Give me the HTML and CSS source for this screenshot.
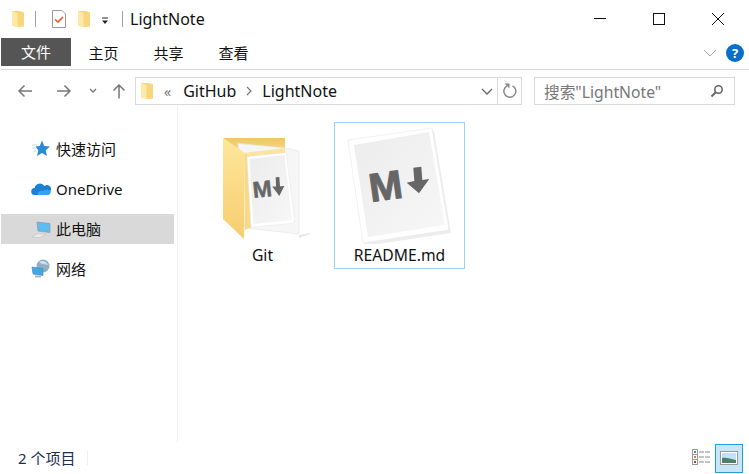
FILE: index.html
```html
<!DOCTYPE html>
<html lang="zh-CN">
<head>
  <meta charset="UTF-8" />
  <title>LightNote</title>
  <link rel="stylesheet" href="styles.css">
</head>
<body>
  <header class="titlebar">
    <svg class="qa-folder" width="14" height="18" viewBox="0 0 14 18"><path d="M1 1h8l4 1.500v14l-5 .5-7-1.500z" fill="#f8d67e"/><path d="M1 1l5.500 2.500v14L1 15.500z" fill="#fdeaa8"/></svg>
    <span class="qa-sep"></span>
    <svg class="qa-check" width="16" height="20" viewBox="0 0 16 20"><path d="M1.500 1.500h9.500l3.500 3.500v13.500h-13z" fill="#fff" stroke="#999"/><path d="M4 10.500l3 2.500 5-5" fill="none" stroke="#e8531f" stroke-width="1.600"/></svg>
    <svg class="qa-folder2" width="14" height="18" viewBox="0 0 14 18"><path d="M1 1h8l4 1.500v14l-5 .5-7-1.500z" fill="#f8d67e"/><path d="M1 1l5.500 2.500v14L1 15.500z" fill="#fdeaa8"/></svg>
    <svg class="qa-drop" width="8" height="8" viewBox="0 0 8 8"><path d="M1 1h6" stroke="#222"/><path d="M1 3.500h6L4 7z" fill="#222"/></svg>
    <span class="qa-sep qa-sep-2"></span>
    <span class="win-title">LightNote</span>
    <div class="win-buttons">
      <svg width="14" height="14" viewBox="0 0 14 14"><path d="M1 6.500h12" stroke="#111"/></svg>
      <svg width="14" height="14" viewBox="0 0 14 14"><rect x="1.500" y="1.500" width="11" height="11" fill="none" stroke="#111"/></svg>
      <svg width="14" height="14" viewBox="0 0 14 14"><path d="M1 1l12 12M13 1L1 13" stroke="#111"/></svg>
    </div>
  </header>

  <nav class="ribbon">
    <span class="tab tab-file">文件</span>
    <span class="tab">主页</span>
    <span class="tab">共享</span>
    <span class="tab">查看</span>
    <svg class="ribbon-chevron" width="14" height="8" viewBox="0 0 14 8"><path d="M1 1l6 6 6-6" fill="none" stroke="#a8a8a8"/></svg>
    <span class="help">?</span>
  </nav>

  <div class="addressrow">
    <svg class="nav-back" width="16" height="14" viewBox="0 0 16 14"><path d="M15 7H2M7.500 1.500L2 7l5.500 5.500" fill="none" stroke="#777" stroke-width="1.500"/></svg>
    <svg class="nav-forward" width="16" height="14" viewBox="0 0 16 14"><path d="M1 7h13M8.500 1.500L14 7l-5.500 5.500" fill="none" stroke="#777" stroke-width="1.500"/></svg>
    <svg class="nav-down" width="8" height="6" viewBox="0 0 8 6"><path d="M1 1l3 3 3-3" fill="none" stroke="#777" stroke-width="1.300"/></svg>
    <svg class="nav-up" width="14" height="16" viewBox="0 0 14 16"><path d="M7 15.500V2M1.500 7.500L7 2l5.500 5.500" fill="none" stroke="#777" stroke-width="1.500"/></svg>
    <div class="address">
      <svg class="addr-folder" width="14" height="18" viewBox="0 0 14 18"><path d="M1 1h8l4 1.500v14l-5 .5-7-1.500z" fill="#f8d67e"/><path d="M1 1l5.500 2.500v14L1 15.500z" fill="#fdeaa8"/></svg>
      <span class="crumb-more">«</span>
      <span class="crumb">GitHub</span>
      <svg class="crumb-sep" width="6" height="10" viewBox="0 0 6 10"><path d="M1 1l4 4-4 4" fill="none" stroke="#777" stroke-width="1.200"/></svg>
      <span class="crumb">LightNote</span>
      <svg class="addr-drop" width="12" height="7" viewBox="0 0 12 7"><path d="M1 1l5 5 5-5" fill="none" stroke="#666" stroke-width="1.300"/></svg>
    </div>
    <div class="refresh">
      <svg width="16" height="16" viewBox="0 0 16 16"><path d="M10.500 2.800A6 6 0 1 1 5 2.900" fill="none" stroke="#888" stroke-width="1.500"/><path d="M2.500 .5h5v5z" fill="#888"/></svg>
    </div>
    <div class="search">
      <span>搜索"LightNote"</span>
      <svg width="14" height="14" viewBox="0 0 14 14"><circle cx="8.500" cy="5.500" r="3.700" fill="none" stroke="#666" stroke-width="1.600"/><path d="M6 8l-4.500 4.500" stroke="#666" stroke-width="2"/></svg>
    </div>
  </div>

  <div class="content">
    <aside class="sidebar">
      <div class="side-item">
        <svg width="20" height="20" viewBox="0 0 20 20"><path d="M11 1.500l2.300 5.500 5.700.5-4.300 3.700 1.300 5.800-5-3-5 3 1.300-5.800L4.500 7.500l4.200-.5z" fill="#2a8ad8"/><path d="M1 6h5M1 9h4M2 12h3" stroke="#bcd8ee"/></svg>
        <span class="side-cjk">快速访问</span>
      </div>
      <div class="side-item">
        <svg width="20" height="14" viewBox="0 0 20 14"><path d="M4 13a3.500 3.500 0 0 1-.500-7A5.500 5.500 0 0 1 13.500 4 4 4 0 0 1 19.500 9c.5 2-1 4-3 4z" fill="#1d7fd1"/><path d="M7 13c-1-3 2-5 5-4 2-2 6-1 7 0 1 2-1 4-3 4z" fill="#35a3ea"/></svg>
        <span>OneDrive</span>
      </div>
      <div class="side-item side-item-active">
        <svg width="20" height="20" viewBox="0 0 20 20"><path d="M1 18l5-3h9l-6 3.500z" fill="#ececec" stroke="#bdbdbd" stroke-width=".5"/><path d="M6 3l13 1.500v9L7 12z" fill="#5cbdf2" stroke="#8d9aa3" stroke-width=".7"/></svg>
        <span class="side-cjk">此电脑</span>
      </div>
      <div class="side-item">
        <svg width="20" height="20" viewBox="0 0 20 20"><circle cx="12" cy="7" r="6.500" fill="#8fb0c4"/><path d="M8 3c3-2 7-1 9 3-3-1-6 0-9-3z" fill="#cfe0ea"/><path d="M1 8l11 1.500v7L2 15z" fill="#3fa8e8" stroke="#5c7f95" stroke-width=".6"/><path d="M4 16.500h6v2H4z" fill="#a4b6c2"/></svg>
        <span class="side-cjk">网络</span>
      </div>
    </aside>
    <main class="files">
      <figure class="file file-folder">
        <svg class="file-icon" width="95" height="115" viewBox="0 0 95 115">
          <defs>
            <linearGradient id="flap" x1="0" y1="0" x2="0" y2="1"><stop offset="0" stop-color="#f0c566"/><stop offset="1" stop-color="#fadb8a"/></linearGradient>
            <linearGradient id="front" x1="0" y1="0" x2="0" y2="1"><stop offset="0" stop-color="#fee79b"/><stop offset="1" stop-color="#f6cd70"/></linearGradient>
            <linearGradient id="sheet" x1="0" y1="0" x2="1" y2="1"><stop offset="0" stop-color="#ececec"/><stop offset="1" stop-color="#f7f7f7"/></linearGradient>
          </defs>
          <path d="M84 106l16-3-16 6z" fill="#e8e8e8"/>
          <path d="M8 9h62v12L28 25z" fill="url(#flap)"/>
          <path d="M23 14.500L70 19l14 3v83L30 99z" fill="#f6f6f6" stroke="#e6e6e6" stroke-width=".7"/>
          <path d="M28 24l42-5v5L32 28z" fill="#fbe3a0"/>
          <path d="M8 9l22 15-1 86L8 90z" fill="url(#front)"/>
          <path d="M30 24l3 4 4 70-7 3z" fill="#f8d98a"/>
          <path d="M32 27.700L71 23.700 80 94 36 98.300z" fill="#fff" stroke="#e6e6e6" stroke-width=".5"/>
          <path d="M34.500 30L69.500 26 77 91 38.500 95z" fill="url(#sheet)"/>
          <text class="md-mark-small" transform="translate(38.500 69) rotate(-6)">M</text>
          <path d="M60.700 48.300L64.300 48 65 57.300l4.300-.3-5 10-7-9.400 3.800-.2z" fill="#666"/>
        </svg>
        <figcaption>Git</figcaption>
      </figure>
      <figure class="file file-selected">
        <svg class="file-icon" width="113" height="120" viewBox="0 0 113 120">
          <path d="M7 19L91 7l17 102-86 13z" fill="#000" opacity=".07"/>
          <path d="M5 16L89 4l17 102-86 13z" fill="#fff" stroke="#e8e8e8" stroke-width=".6"/>
          <path d="M11 21L86 8l16 93-77 12z" fill="url(#sheet)"/>
          <text class="md-mark" transform="translate(28 78) rotate(-8)">M</text>
          <path d="M70.300 43.700l8-1 1 13.300 7-1L76 69.300l-12.300-10.600 7.600-1.700z" fill="#666"/>
        </svg>
        <figcaption>README.md</figcaption>
      </figure>
    </main>
  </div>

  <footer class="statusbar">
    <span class="status-count">2 个项目</span>
    <span class="status-sep"></span>
    <div class="view-buttons">
      <svg class="view-details" width="20" height="20" viewBox="0 0 20 20">
        <rect x="1.500" y="1.500" width="5" height="5" fill="#fff" stroke="#999"/><rect x="3" y="3" width="2" height="2" fill="#3a86c8"/>
        <rect x="1.500" y="6.500" width="5" height="5" fill="#fff" stroke="#999"/><rect x="3" y="8" width="2" height="2" fill="#c8862a"/>
        <rect x="1.500" y="11.500" width="5" height="5" fill="#fff" stroke="#999"/><rect x="3" y="13" width="2" height="2" fill="#b83a2a"/>
        <path d="M8 4h5M14 4h5M8 9h5M14 9h5M8 14h5M14 14h5" stroke="#888"/>
      </svg>
      <div class="view-large">
        <svg width="18" height="14" viewBox="0 0 18 14"><rect x=".5" y=".5" width="17" height="13" fill="#fff" stroke="#999"/><rect x="2" y="2" width="14" height="10" fill="#bfe2f7"/><path d="M2 7c4-1 8 1 14 2v3H2z" fill="#4f7f6a"/></svg>
      </div>
    </div>
  </footer>
</body>
</html>
```

FILE: styles.css
```css
body {
  font-family: "Noto Sans", "Noto Sans CJK SC", sans-serif;
  margin: 0;
  padding: 0;
  width: 749px;
  height: 474px;
  overflow: hidden;
  background: white;
  color: #111;
}
figure {
  margin: 0;
}

/* title bar */
.titlebar {
  display: flex;
  align-items: center;
  height: 38px;
  padding-left: 11px;
}
.qa-sep {
  width: 1px;
  height: 16px;
  background: #a0a0a0;
  margin: 0 15px 0 10px;
}
.qa-sep-2 {
  margin: 0 7px 0 13px;
}
.qa-folder2 {
  margin-left: 10px;
}
.qa-drop {
  margin-left: 10px;
  margin-top: 4px;
}
.win-title {
  font-size: 16px;
}
.win-buttons {
  display: flex;
  gap: 45px;
  margin-left: auto;
  margin-right: 24px;
}

/* ribbon */
.ribbon {
  display: flex;
  align-items: center;
  height: 28px;
  margin-left: 1px;
  padding-right: 5px;
  font-size: 15px;
}
.tab {
  width: 65px;
  text-align: center;
}
.tab-file {
  width: 70px;
  line-height: 28px;
  background: #555;
  color: white;
}
.ribbon-chevron {
  margin-left: auto;
  margin-right: 9px;
  margin-top: 1px;
}
.help {
  width: 18px;
  height: 18px;
  margin-top: 1px;
  border-radius: 50%;
  background: #0a6fc9;
  color: white;
  font-size: 13px;
  font-weight: bold;
  line-height: 18px;
  text-align: center;
}

/* address row */
.addressrow {
  display: flex;
  align-items: center;
  height: 28px;
  margin: 3px 0 0 1px;
  padding-top: 7px;
  border-top: 1px solid #d9d9d9;
  font-size: 16px;
}
.nav-back {
  margin-left: 16px;
}
.nav-forward {
  margin-left: 23px;
}
.nav-down {
  margin-left: 17px;
}
.nav-up {
  margin-left: 15px;
}
.address {
  display: flex;
  align-items: center;
  box-sizing: border-box;
  width: 363px;
  height: 28px;
  margin-left: 9px;
  border: 1px solid #d9d9d9;
}
.addr-folder {
  margin-left: 4px;
}
.crumb-more {
  margin: 0 12px 0 10px;
  color: #777;
  font-size: 14px;
}
.crumb-sep {
  margin: 0 10px 0 10px;
}
.addr-drop {
  margin-left: auto;
  margin-right: 4px;
}
.refresh {
  display: flex;
  align-items: center;
  justify-content: center;
  box-sizing: border-box;
  width: 24px;
  height: 28px;
  border: 1px solid #d9d9d9;
  border-left: none;
}
.search {
  display: flex;
  align-items: center;
  justify-content: space-between;
  box-sizing: border-box;
  width: 201px;
  height: 28px;
  margin-left: 12px;
  padding: 0 10px 0 9px;
  border: 1px solid #d9d9d9;
  color: #777;
  font-size: 15.7px;
}

/* content */
.content {
  display: flex;
  height: 337px;
}
.sidebar {
  box-sizing: border-box;
  width: 178px;
  padding: 29px 0 0 1px;
  border-right: 1px solid #f0f0f0;
  font-size: 15px;
}
.side-item {
  display: flex;
  align-items: center;
  gap: 5px;
  width: 173px;
  height: 30px;
  margin-bottom: 10px;
  padding-left: 30px;
  box-sizing: border-box;
}
.side-cjk {
  margin-top: -2px;
}
.side-item-active {
  background: #d9d9d9;
}
.files {
  display: flex;
  align-items: flex-start;
  gap: 6px;
  padding: 17px 0 0 19px;
}
.file {
  display: flex;
  flex-direction: column;
  align-items: center;
  box-sizing: border-box;
  width: 131px;
  height: 147px;
  padding-top: 1px;
  border: 1px solid transparent;
  font-size: 15.7px;
}
.file-folder {
  padding-top: 6px;
}
.file-selected {
  border-color: #99d1ff;
}
.file-icon {
  flex: none;
}
.file figcaption {
  margin-top: 1px;
  line-height: 20px;
}
.md-mark {
  font-family: "Liberation Sans", sans-serif;
  font-size: 40px;
  font-weight: bold;
  fill: #666;
  stroke: #666;
  stroke-width: 1px;
}
.md-mark-small {
  font-family: "Liberation Sans", sans-serif;
  font-size: 23px;
  font-weight: bold;
  fill: #666;
  stroke: #666;
  stroke-width: .5px;
}

/* status bar */
.statusbar {
  display: flex;
  align-items: center;
  height: 32px;
  padding-left: 18px;
  font-size: 15px;
  color: #1d2f4d;
}
.status-count {
  margin-top: -2px;
}
.status-sep {
  width: 1px;
  height: 14px;
  margin-left: 12px;
  background: #eee;
}
.view-buttons {
  display: flex;
  align-items: center;
  gap: 4px;
  margin-left: auto;
  margin-right: 6px;
}
.view-large {
  display: flex;
  align-items: center;
  justify-content: center;
  box-sizing: border-box;
  width: 28px;
  height: 29px;
  background: #c9e6f7;
  border: 1px solid #26a0da;
}
```
